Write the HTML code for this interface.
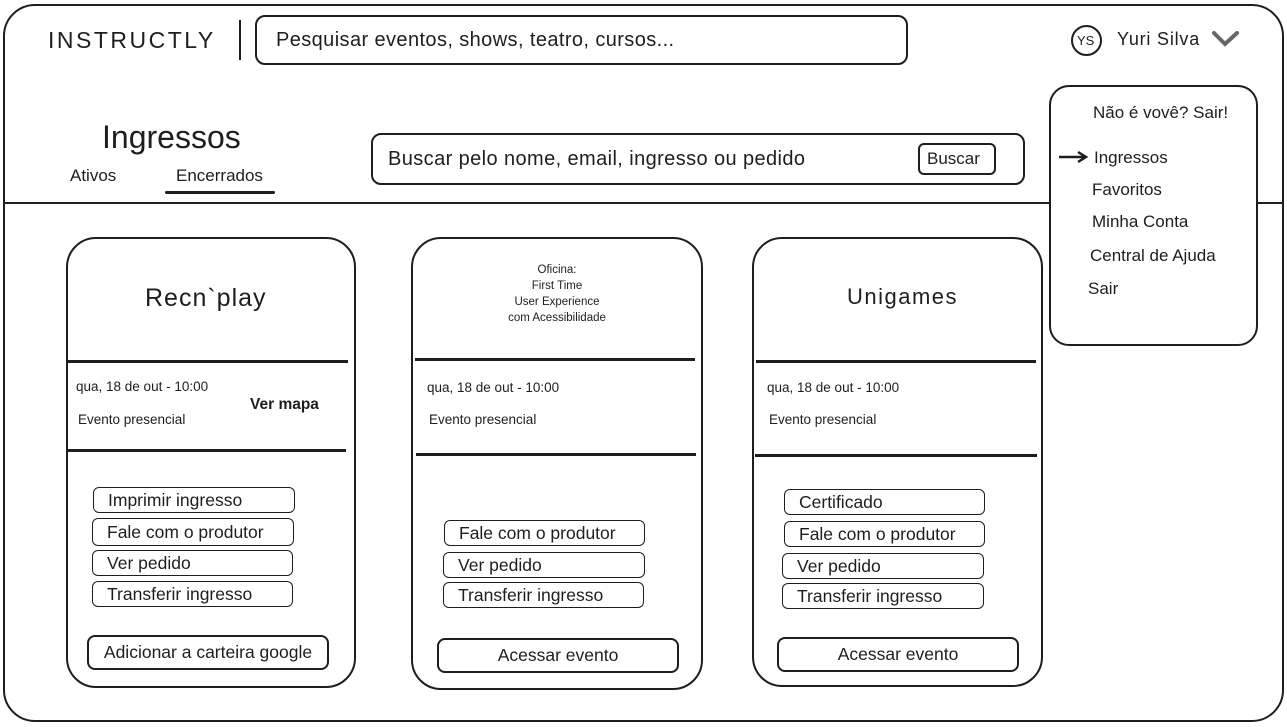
<!DOCTYPE html>
<html><head><meta charset="utf-8"><style>
*{margin:0;padding:0;box-sizing:border-box}
body{width:1287px;height:727px;background:#fff;position:relative;overflow:hidden;font-family:"Liberation Sans",sans-serif;color:#1e1e1e}
.a{position:absolute}
.b{position:absolute;border:2px solid #1e1e1e}
.t{position:absolute;white-space:nowrap;line-height:1}
.btn{position:absolute;border:1.8px solid #1e1e1e;border-radius:6px;font-size:17.5px;padding-left:14px;display:flex;align-items:center}
.big{position:absolute;border:2.5px solid #1e1e1e;border-radius:8px;font-size:17.5px;display:flex;align-items:center;justify-content:center}
.ln{position:absolute;height:3px;background:#1e1e1e}
.sm{font-size:13.5px}
</style></head><body>
<div class="b" style="left:3px;top:4px;width:1281px;height:718px;border-radius:32px"></div>
<div class="a" style="left:4px;top:202px;width:1045px;height:2px;background:#1e1e1e"></div>
<div class="a" style="left:1257px;top:202px;width:27px;height:2px;background:#1e1e1e"></div>

<div class="t" style="left:48px;top:29px;font-size:23px;letter-spacing:2.5px">INSTRUCTLY</div>
<div class="a" style="left:239px;top:20px;width:2px;height:40px;background:#1e1e1e"></div>
<div class="b" style="left:255px;top:15px;width:653px;height:50px;border-radius:10px;border-width:2.5px"></div>
<div class="t" style="left:276px;top:30px;font-size:20px;letter-spacing:0.4px">Pesquisar eventos, shows, teatro, cursos...</div>

<div class="b" style="left:1071px;top:25px;width:31px;height:31px;border-radius:50%"></div>
<div class="t" style="left:1077px;top:34px;font-size:13px">YS</div>
<div class="t" style="left:1117px;top:30px;font-size:18px;letter-spacing:0.8px">Yuri Silva</div>
<svg class="a" style="left:1211px;top:30px" width="30" height="18"><path d="M3 3 L14 14 L26 3" fill="none" stroke="#666" stroke-width="4" stroke-linecap="round"/></svg>

<div class="t" style="left:102px;top:121px;font-size:32px">Ingressos</div>
<div class="t" style="left:70px;top:167px;font-size:17px">Ativos</div>
<div class="t" style="left:176px;top:167px;font-size:17px">Encerrados</div>
<div class="a" style="left:165px;top:191px;width:110px;height:3px;background:#1e1e1e;border-radius:2px"></div>

<div class="b" style="left:371px;top:133px;width:654px;height:52px;border-radius:10px;border-width:2.5px"></div>
<div class="t" style="left:388px;top:149px;font-size:20px;letter-spacing:0.4px">Buscar pelo nome, email, ingresso ou pedido</div>
<div class="b" style="left:918px;top:143px;width:78px;height:32px;border-radius:6px"></div>
<div class="t" style="left:927px;top:150px;font-size:17px">Buscar</div>

<div class="b" style="left:1049px;top:85px;width:209px;height:261px;border-radius:20px"></div>
<div class="t" style="left:1093px;top:104px;font-size:17px">Não é vovê? Sair!</div>
<svg class="a" style="left:1058px;top:150px" width="32" height="14"><path d="M1 7 H28 M20 2 L28 7 L20 12" fill="none" stroke="#1e1e1e" stroke-width="2.5"/></svg>
<div class="t" style="left:1094px;top:149px;font-size:17px">Ingressos</div>
<div class="t" style="left:1092px;top:181px;font-size:17px">Favoritos</div>
<div class="t" style="left:1092px;top:213px;font-size:17px">Minha Conta</div>
<div class="t" style="left:1090px;top:247px;font-size:17px">Central de Ajuda</div>
<div class="t" style="left:1088px;top:280px;font-size:17px">Sair</div>

<!-- card1 -->
<div class="b" style="left:66px;top:237px;width:290px;height:451px;border-radius:30px"></div>
<div class="t" style="left:145px;top:286px;font-size:25px;letter-spacing:1px">Recn`play</div>
<div class="ln" style="left:68px;top:360px;width:280px"></div>
<div class="t sm" style="left:76px;top:380px">qua, 18 de out - 10:00</div>
<div class="t" style="left:250px;top:397px;font-size:15.5px;font-weight:bold">Ver mapa</div>
<div class="t sm" style="left:78px;top:413px">Evento presencial</div>
<div class="ln" style="left:68px;top:449px;width:278px"></div>
<div class="btn" style="left:93px;top:487px;width:202px;height:26px">Imprimir ingresso</div>
<div class="btn" style="left:92px;top:518px;width:202px;height:28px">Fale com o produtor</div>
<div class="btn" style="left:92px;top:550px;width:201px;height:26px">Ver pedido</div>
<div class="btn" style="left:92px;top:581px;width:201px;height:26px">Transferir ingresso</div>
<div class="big" style="left:87px;top:635px;width:242px;height:35px">Adicionar a carteira google</div>

<!-- card2 -->
<div class="b" style="left:411px;top:237px;width:292px;height:453px;border-radius:30px"></div>
<div class="t" style="left:411px;top:262px;width:292px;text-align:center;font-size:11.5px;line-height:16px;white-space:normal">Oficina:<br>First Time<br>User Experience<br>com Acessibilidade</div>
<div class="ln" style="left:415px;top:358px;width:280px"></div>
<div class="t sm" style="left:427px;top:381px">qua, 18 de out - 10:00</div>
<div class="t sm" style="left:429px;top:413px">Evento presencial</div>
<div class="ln" style="left:416px;top:453px;width:280px"></div>
<div class="btn" style="left:444px;top:520px;width:201px;height:26px">Fale com o produtor</div>
<div class="btn" style="left:443px;top:552px;width:202px;height:26px">Ver pedido</div>
<div class="btn" style="left:443px;top:582px;width:201px;height:26px">Transferir ingresso</div>
<div class="big" style="left:437px;top:638px;width:242px;height:35px">Acessar evento</div>

<!-- card3 -->
<div class="b" style="left:752px;top:237px;width:291px;height:450px;border-radius:30px"></div>
<div class="t" style="left:847px;top:286px;font-size:22px;letter-spacing:1.5px">Unigames</div>
<div class="ln" style="left:756px;top:360px;width:280px"></div>
<div class="t sm" style="left:767px;top:381px">qua, 18 de out - 10:00</div>
<div class="t sm" style="left:769px;top:413px">Evento presencial</div>
<div class="ln" style="left:755px;top:454px;width:282px"></div>
<div class="btn" style="left:784px;top:489px;width:201px;height:26px">Certificado</div>
<div class="btn" style="left:784px;top:521px;width:201px;height:26px">Fale com o produtor</div>
<div class="btn" style="left:782px;top:553px;width:202px;height:26px">Ver pedido</div>
<div class="btn" style="left:782px;top:583px;width:202px;height:26px">Transferir ingresso</div>
<div class="big" style="left:777px;top:637px;width:242px;height:35px">Acessar evento</div>
</body></html>
